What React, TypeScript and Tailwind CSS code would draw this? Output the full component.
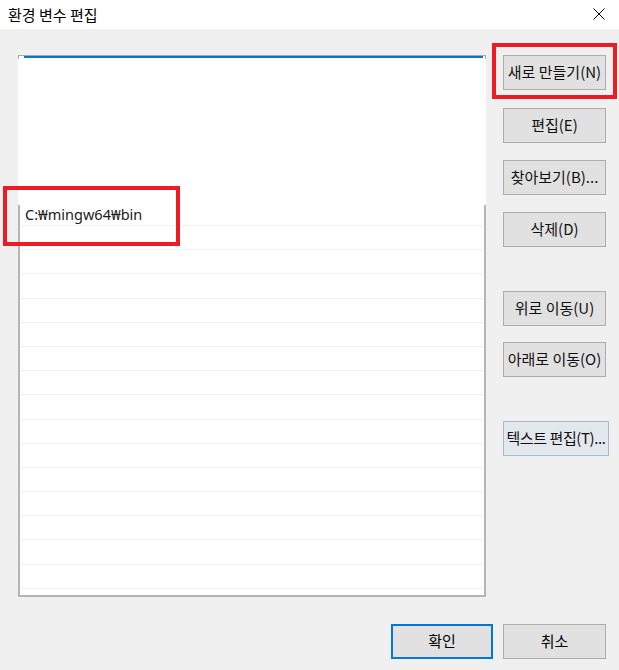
const FONT = "font-['Noto_Sans_CJK_KR','Noto_Sans',sans-serif]";

type SideButton = { label: string; mt: string; wide?: boolean };

const SIDE_BUTTONS: SideButton[] = [
  { label: '새로 만들기(N)', mt: 'mt-0' },
  { label: '편집(E)', mt: 'mt-[18px]' },
  { label: '찾아보기(B)...', mt: 'mt-[17px]' },
  { label: '삭제(D)', mt: 'mt-[17px]' },
  { label: '위로 이동(U)', mt: 'mt-[44px]' },
  { label: '아래로 이동(O)', mt: 'mt-[16px]' },
  { label: '텍스트 편집(T)...', mt: 'mt-[44px]', wide: true },
];

function Button({ label, mt, wide }: SideButton) {
  const look = wide
    ? 'w-[106px] bg-[#e3e8ee] border-[#a9b9cf] tracking-[-0.4px]'
    : 'w-[103px] bg-[#e1e1e1] border-[#adadad]';
  return (
    <div
      className={`${mt} ${look} h-[35px] border flex items-center justify-center whitespace-nowrap text-[15px] text-[#111]`}
    >
      {label}
    </div>
  );
}

function PathList() {
  const rows = Array.from({ length: 15 });
  return (
    <div className="w-[468px] h-[542px] flex flex-col">
      {/* top edge with the selected row's blue line */}
      <div className="h-[4px] border-t border-x border-[#a8a8a8] bg-white pl-[5px] pr-[2px]">
        <div className="h-[2px] bg-[#0078d7]" />
      </div>
      {/* blanked-out area */}
      <div className="h-[146px] bg-white" />
      <div className="flex-1 bg-white border-x-2 border-b-2 border-[#b4b4b8] overflow-hidden">
        <div className="h-[21px] border-b border-[#f0f0f0] pl-[5px] flex items-center text-[14.5px] text-[#1a1a1a] font-['Noto_Sans','Noto_Sans_CJK_KR',sans-serif]">
          C:₩mingw64₩bin
        </div>
        {rows.map((_, i) => (
          <div key={i} className="h-[24.2px] border-b border-[#f0f0f0]" />
        ))}
      </div>
    </div>
  );
}

export default function App() {
  return (
    <div className={`w-[619px] h-[670px] bg-[#f0f0f0] relative ${FONT} text-black`}>
      {/* title bar */}
      <div className="h-[29px] bg-white flex items-center justify-between pl-[8px] pr-[14px]">
        <span className="text-[15px] leading-none">환경 변수 편집</span>
        <svg width="12" height="12" viewBox="0 0 12 12" className="mt-[-1px]">
          <path d="M0.5 0.5 L11.5 11.5 M11.5 0.5 L0.5 11.5" stroke="#000" strokeWidth="1" />
        </svg>
      </div>

      {/* body */}
      <div className="flex pl-[18px] pt-[26px]">
        <PathList />
        <div className="ml-[17px] flex flex-col">
          {SIDE_BUTTONS.map((b) => (
            <Button key={b.label} {...b} />
          ))}
        </div>
      </div>

      {/* footer */}
      <div className="flex justify-end gap-[10px] pr-[13px] mt-[27px]">
        <div className="w-[102px] h-[35px] border-2 border-[#0078d7] bg-[#e1e1e1] flex items-center justify-center text-[15px]">
          확인
        </div>
        <div className="w-[103px] h-[35px] border border-[#adadad] bg-[#e1e1e1] flex items-center justify-center text-[15px]">
          취소
        </div>
      </div>

      {/* red annotation boxes */}
      <div className="absolute left-[3px] top-[186px] w-[177px] h-[60px] border-4 border-[#ed1c24]" />
      <div className="absolute left-[492px] top-[43px] w-[125px] h-[56px] border-4 border-[#ed1c24]" />
    </div>
  );
}
